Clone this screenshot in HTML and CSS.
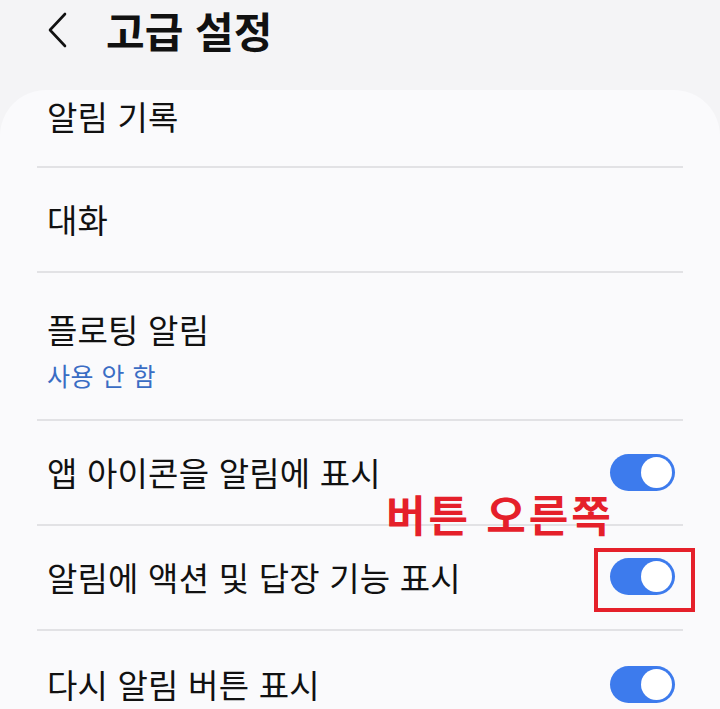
FILE: index.html
```html
<!DOCTYPE html>
<html lang="ko">
  <head>
    <meta charset="UTF-8" />
    <meta name="viewport" content="width=device-width, initial-scale=1.0" />
    <title>고급 설정</title>
    <link rel="stylesheet" href="styles.css">
  </head>
  <body>
    <div class="header">
      <svg class="back" width="24" height="38" viewBox="0 0 24 38">
        <path d="M19 3 L4 19 L19 35" fill="none" stroke="#111" stroke-width="2.6" stroke-linecap="round" stroke-linejoin="round"/>
      </svg>
      <h1>고급 설정</h1>
    </div>

    <div class="card">
      <div class="list">
        <div class="row first"><span class="label">알림 기록</span></div>
        <div class="row"><span class="label">대화</span></div>
        <div class="row tall">
          <div class="texts">
            <span class="label">플로팅 알림</span>
            <span class="sub">사용 안 함</span>
          </div>
        </div>
        <div class="row">
          <span class="label">앱 아이콘을 알림에 표시</span>
          <div class="toggle"><div class="knob"></div></div>
        </div>
        <div class="row">
          <span class="label">알림에 액션 및 답장 기능 표시</span>
          <div class="mark">
            <div class="toggle"><div class="knob"></div></div>
          </div>
        </div>
        <div class="row last">
          <span class="label">다시 알림 버튼 표시</span>
          <div class="toggle"><div class="knob"></div></div>
        </div>
      </div>
      <!-- note written on top of the list -->
      <div class="note">버튼 오른쪽</div>
    </div>
  </body>
</html>
```

FILE: styles.css
```css
* {
  margin: 0;
  padding: 0;
  box-sizing: border-box;
}
body {
  width: 720px;
  height: 709px;
  overflow: hidden;
  background-color: #f4f4f6;
  font-family: "Noto Sans CJK KR", "Noto Sans", sans-serif;
  color: #111;
}
.header {
  display: flex;
  align-items: center;
  height: 90px;
  padding: 0 0 30px 46px;
}
.back {
  display: block;
}
h1 {
  margin-left: 36px;
  font-size: 42px;
  font-weight: 700;
  line-height: 1;
}
.card {
  position: relative;
  height: 619px;
  overflow: hidden;
  background-color: #fafafc;
  border-radius: 46px 46px 0 0;
}
.list {
  padding: 0 37px;
}
.row {
  display: flex;
  align-items: center;
  justify-content: space-between;
  height: 105px;
  padding: 0 8px 0 10px;
  border-bottom: 2px solid #e2e2e5;
}
.row.first {
  height: 78px;
  padding-bottom: 22px;
}
.row.tall {
  height: 148px;
}
.row.last {
  border-bottom: none;
  padding-top: 2px;
}
.label {
  font-size: 33px;
  line-height: 1.2;
  letter-spacing: 0.2px;
}
.texts {
  display: flex;
  flex-direction: column;
  gap: 10px;
  padding-top: 8px;
}
.sub {
  font-size: 25px;
  line-height: 1.2;
  color: #3a6dc4;
  letter-spacing: 0.5px;
}
.toggle {
  display: flex;
  justify-content: flex-end;
  width: 65px;
  height: 37px;
  padding: 3px;
  border-radius: 19px;
  background-color: #3d7bed;
}
.knob {
  width: 31px;
  height: 31px;
  border-radius: 50%;
  background-color: #fff;
}
.mark {
  margin: 5px -20px 0 0;
  padding: 6px 16px 13px 12px;
  border: 4px solid #e5202a;
}
.note {
  position: absolute;
  left: 386px;
  top: 400px;
  font-size: 43px;
  font-weight: 700;
  line-height: 1.1;
  color: #e5202a;
  letter-spacing: 3px;
}
```
